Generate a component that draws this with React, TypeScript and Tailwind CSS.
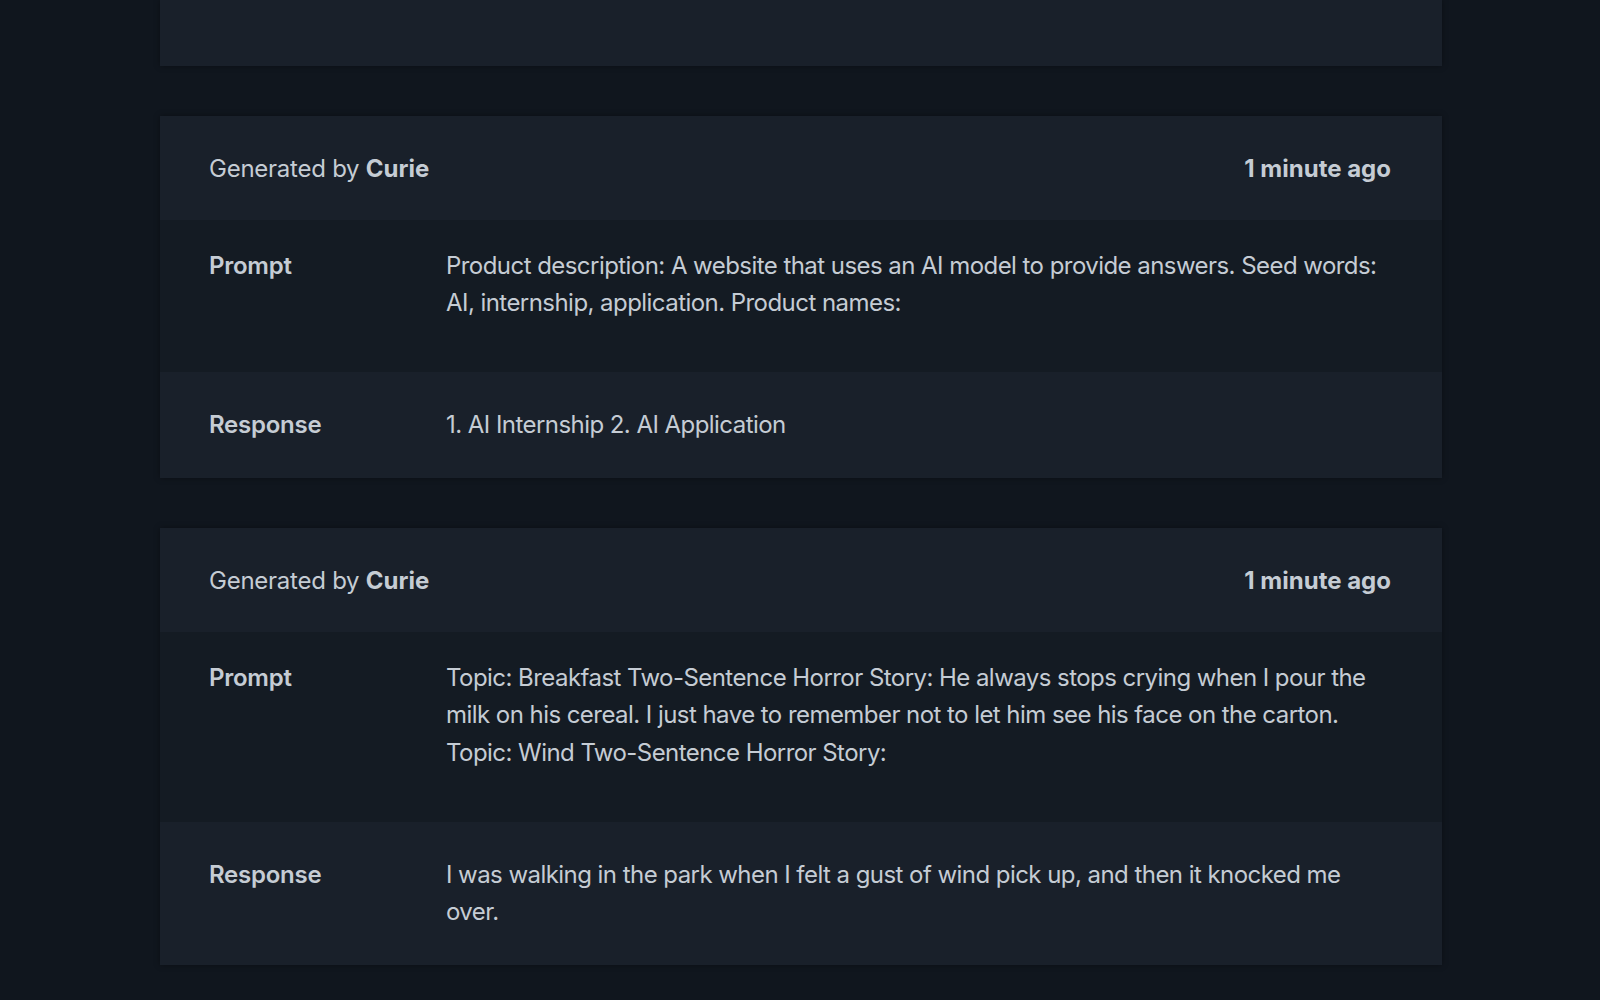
import React from 'react';

interface Generation {
  model: string;
  time: string;
  prompt: string;
  response: string;
}

const generations: Generation[] = [
  {
    model: 'Curie',
    time: '1 minute ago',
    prompt:
      'Product description: A website that uses an AI model to provide answers. Seed words: AI, internship, application. Product names:',
    response: '1. AI Internship 2. AI Application',
  },
  {
    model: 'Curie',
    time: '1 minute ago',
    prompt:
      'Topic: Breakfast Two-Sentence Horror Story: He always stops crying when I pour the milk on his cereal. I just have to remember not to let him see his face on the carton. Topic: Wind Two-Sentence Horror Story:',
    response: 'I was walking in the park when I felt a gust of wind pick up, and then it knocked me over.',
  },
];

const GenerationCard: React.FC<{ item: Generation }> = ({ item }) => {
  return (
    <div className="w-[1282px] shadow-[0_0_6px_rgba(0,0,0,0.35)]">
      <div className="flex items-center justify-between bg-[#19202a] pl-[49px] pr-[51px] pt-[34px] pb-[32px]">
        <span>
          Generated by <span className="font-bold tracking-normal">{item.model}</span>
        </span>
        <span className="font-bold tracking-normal">{item.time}</span>
      </div>
      <div className="flex bg-[#141b23] px-[49px] pt-[27px] pb-[50px]">
        <div className="w-[237px] shrink-0 font-semibold">Prompt</div>
        <div className="flex-1 tracking-[-0.55px]">{item.prompt}</div>
      </div>
      <div className="flex bg-[#19202a] px-[49px] pt-[34px] pb-[34px]">
        <div className="w-[237px] shrink-0 font-semibold">Response</div>
        <div className="flex-1 tracking-[-0.55px]">{item.response}</div>
      </div>
    </div>
  );
};

const App: React.FC = () => {
  return (
    <div className="min-h-screen bg-[#10161e] font-['Inter','Liberation_Sans',sans-serif] text-[24px] leading-[37.7px] tracking-[-0.25px] text-[#c5ccd4]">
      <div className="flex flex-col gap-[50px] pl-[160px] pb-[40px]">
        <div className="h-[66px] w-[1282px] bg-[#19202a] shadow-[0_0_6px_rgba(0,0,0,0.35)]" />
        {generations.map((g, i) => (
          <GenerationCard key={i} item={g} />
        ))}
      </div>
    </div>
  );
};

export default App;
